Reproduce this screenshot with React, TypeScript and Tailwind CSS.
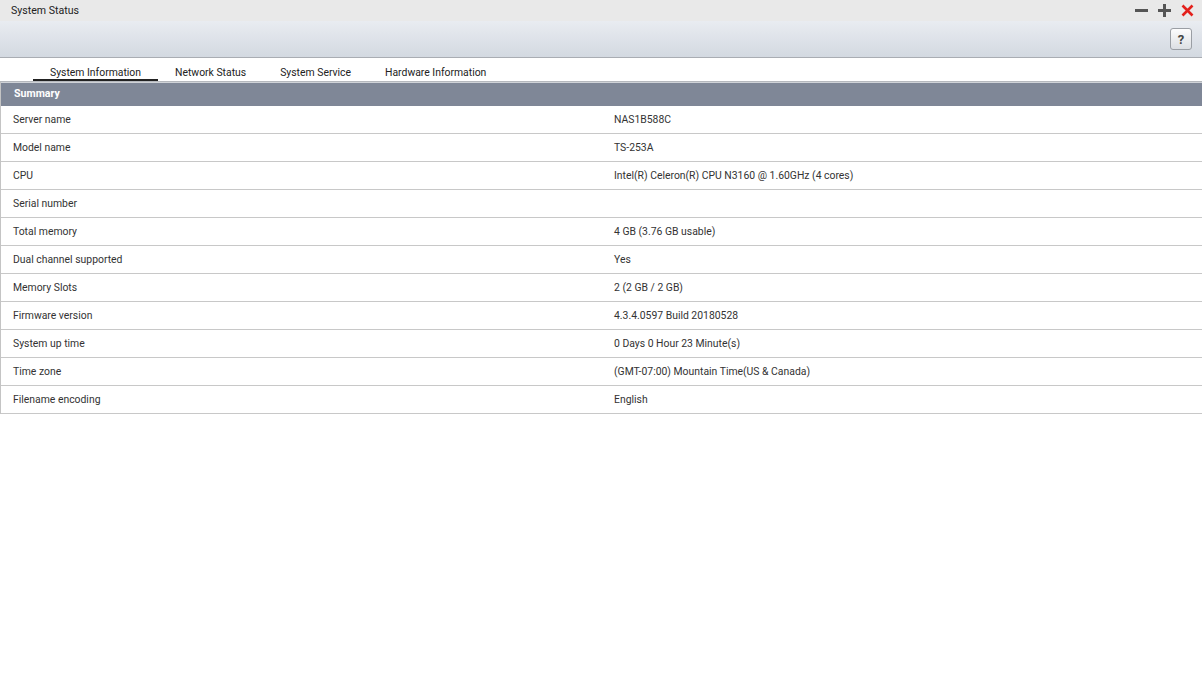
import { useState } from 'react'

const tabs = ['System Information', 'Network Status', 'System Service', 'Hardware Information']

const summary: [string, string][] = [
  ['Server name', 'NAS1B588C'],
  ['Model name', 'TS-253A'],
  ['CPU', 'Intel(R) Celeron(R) CPU N3160 @ 1.60GHz (4 cores)'],
  ['Serial number', ''],
  ['Total memory', '4 GB (3.76 GB usable)'],
  ['Dual channel supported', 'Yes'],
  ['Memory Slots', '2 (2 GB / 2 GB)'],
  ['Firmware version', '4.3.4.0597 Build 20180528'],
  ['System up time', '0 Days 0 Hour 23 Minute(s)'],
  ['Time zone', '(GMT-07:00) Mountain Time(US & Canada)'],
  ['Filename encoding', 'English'],
]

export default function App() {
  const [active, setActive] = useState(0)

  return (
    <div className="w-[1202px] h-[700px] bg-white text-[#333] font-['Roboto','Liberation_Sans',sans-serif] text-[10.4px] overflow-hidden">
      {/* window title bar */}
      <div className="h-[21px] bg-[#e9e9e9] flex items-center pl-[11px] pr-[8px] pt-[1px]">
        <span className="text-[10.6px] text-[#222]">System Status</span>
        <div className="ml-auto flex items-center gap-[10px] -mt-[1px]">
          <svg width="13" height="13" viewBox="0 0 13 13">
            <rect x="0" y="5" width="13" height="3" fill="#555" />
          </svg>
          <svg width="13" height="13" viewBox="0 0 13 13">
            <rect x="0" y="5" width="13" height="3" fill="#555" />
            <rect x="5" y="0" width="3" height="13" fill="#555" />
          </svg>
          <svg width="13" height="13" viewBox="0 0 13 13">
            <path d="M1.5 1.5 L11.5 11.5 M11.5 1.5 L1.5 11.5" stroke="#e3201b" strokeWidth="2.6" />
          </svg>
        </div>
      </div>

      {/* toolbar */}
      <div className="h-[37px] bg-gradient-to-b from-[#e9ecf1] to-[#d3d9e1] border-b border-[#a9adb3] flex items-center justify-end pr-[10px]">
        <button className="w-[22px] h-[22px] rounded-[3px] border border-[#9a9ea4] bg-gradient-to-b from-[#fdfdfd] to-[#dcdfe3] flex items-center justify-center text-[13px] font-bold text-[#444] leading-none">
          ?
        </button>
      </div>

      {/* tabs */}
      <div className="h-[24px] flex items-end pl-[33px] border-b border-[#b5b8bd]">
        {tabs.map((t, i) => (
          <button
            key={t}
            onClick={() => setActive(i)}
            className={
              'h-[24px] flex items-center px-[17px] pt-[10px] text-[10.4px] text-[#222] border-b-2 ' +
              (i === active ? 'border-[#222]' : 'border-transparent')
            }
          >
            {t}
          </button>
        ))}
      </div>

      {/* summary table */}
      <div className="border-l border-[#c4c4c4]">
        <div className="h-[24px] bg-[#7f8797] flex items-center pl-[13px] pb-[2px] border-t border-[#d0d3d8]">
          <span className="text-white font-bold text-[10.6px]">Summary</span>
        </div>
        {summary.map(([label, value]) => (
          <div key={label} className="h-[28px] flex items-center border-b border-[#c8c8c8]">
            <div className="w-[613px] pl-[12px]">{label}</div>
            <div>{value}</div>
          </div>
        ))}
      </div>
    </div>
  )
}
